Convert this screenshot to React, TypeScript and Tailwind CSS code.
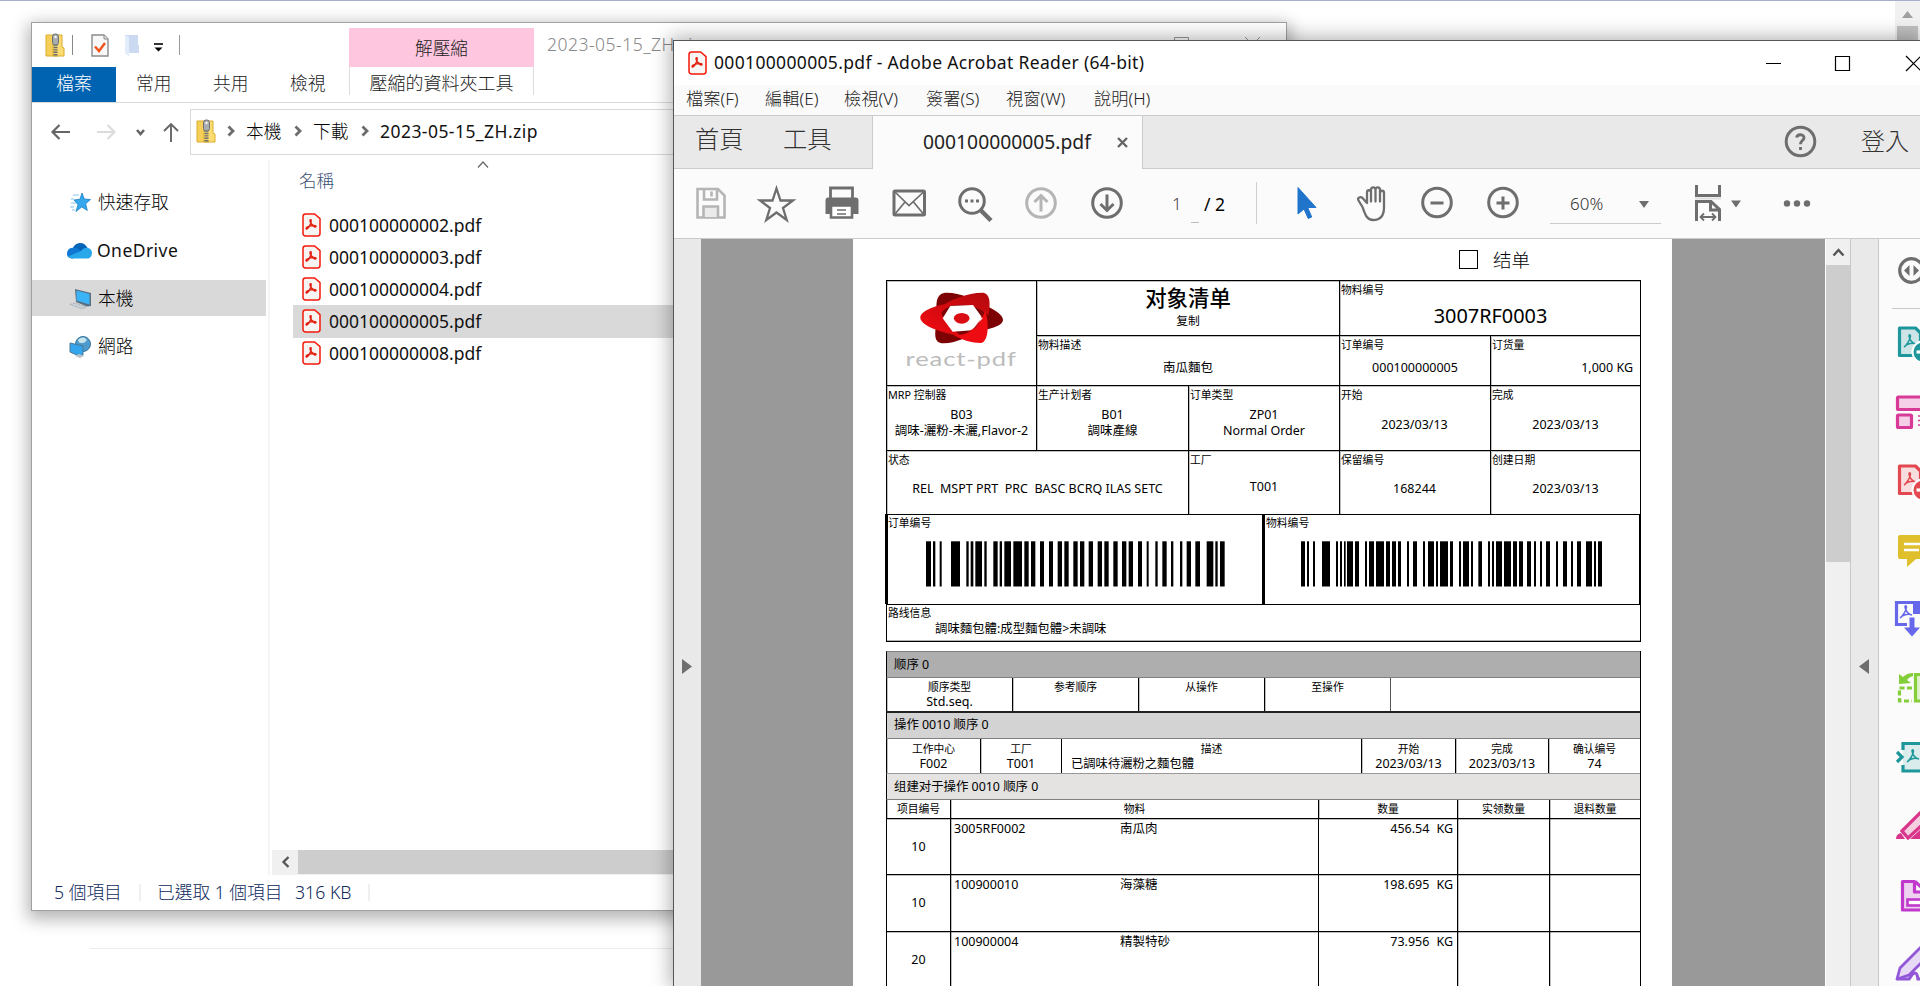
import type { ReactNode } from "react";

const ORDER_BARS = [
  [198, 213], [219, 226], [239, 245], [273, 300], [319, 326], [332, 340], [346, 366], [373, 380], [400, 413],
  [419, 426], [433, 453], [460, 486], [493, 506], [513, 526], [540, 552], [567, 579], [593, 606], [613, 626],
  [640, 653], [660, 673], [686, 699], [713, 726], [733, 746], [760, 773], [786, 799], [806, 819], [834, 846],
  [860, 866], [886, 893], [907, 920], [933, 940], [960, 967], [980, 993], [1006, 1020], [1040, 1060],
  [1066, 1073], [1080, 1094],
];

const MATERIAL_BARS = [
  [123, 135], [141, 147], [159, 165], [186, 210], [228, 234], [240, 246], [252, 257], [261, 279], [285, 297],
  [315, 321], [327, 342], [348, 372], [378, 390], [396, 408], [414, 423], [441, 447], [459, 471], [489, 495],
  [504, 522], [528, 534], [540, 564], [570, 579], [597, 603], [609, 627], [633, 639], [655, 666], [684, 690],
  [696, 702], [708, 726], [732, 753], [759, 771], [777, 789], [801, 813], [822, 828], [840, 846], [858, 870],
  [888, 894], [909, 921], [933, 939], [951, 963], [978, 996], [1002, 1008], [1014, 1026],
];

const FILES = ["000100000002.pdf", "000100000003.pdf", "000100000004.pdf", "000100000005.pdf", "000100000008.pdf"];

const ITEMS = [
  { no: "10", code: "3005RF0002", name: "南瓜肉", qty: "456.54", h: "h-[56px]" },
  { no: "10", code: "100900010", name: "海藻糖", qty: "198.695", h: "h-[57px]" },
  { no: "20", code: "100900004", name: "精製特砂", qty: "73.956", h: "h-[56px]" },
];

function PdfIcon() {
  return (
    <svg width="19" height="24" viewBox="0 0 19 24" className="shrink-0">
      <path d="M3.500 1h9.200L18 5.600V20.500a2.400 2.400 0 0 1-2.400 2.400H3.500A2.500 2.500 0 0 1 1 20.400V3.400A2.500 2.500 0 0 1 3.500 1z" fill="#f7f4f4" stroke="#f5190a" strokeWidth="1.500" />
      <path d="M4.200 15.800c-.5-.9.800-2 3.200-2.700 1.200-2 2-4.300 1.800-5.700-.1-.9-1.200-.8-1.200.1 0 2 2.300 5.200 4.500 6.200 1.500.6 2-.7.800-1-1.500-.4-3.900-.1-5.900.4-1.200 2.200-2.600 3.400-3.200 2.700z" fill="none" stroke="#e3200f" strokeWidth="1.500" />
    </svg>
  );
}

function ZipIcon() {
  return (
    <svg width="20" height="24" viewBox="0 0 20 24" className="shrink-0">
      <path d="M1 2h12v21H1z" fill="#f5cf57" stroke="#dcae2c" strokeWidth="1" />
      <path d="M13 2h4v12l2 1v8H8V2z" fill="#fbdc72" stroke="#dcae2c" strokeWidth="1" />
      <path d="M10.500 9v14" stroke="#6b6b6b" strokeWidth="4" strokeDasharray="1.400 1" />
      <rect x="7.500" y="1" width="6" height="11" rx="2.500" fill="#a9adb0" stroke="#6d7275" />
      <circle cx="10.500" cy="4" r="1.200" fill="#f3f3f3" />
    </svg>
  );
}

function Chevron() {
  return (
    <svg width="9" height="12" viewBox="0 0 9 12" className="shrink-0">
      <path d="M1.500 1.500 6 6l-4.500 4.500" fill="none" stroke="#6c6c6c" strokeWidth="2.800" />
    </svg>
  );
}

function Barcode({ bars, offset, width }: { bars: number[][]; offset: number; width: number }) {
  return (
    <svg width={width} height="46" viewBox={`0 0 ${width} 46`}>
      {bars.map(([a, b]) => (
        <rect key={a} x={(a - offset) / 3} y="0.300" width={(b - a) / 3} height="45.200" fill="#000" />
      ))}
    </svg>
  );
}

function Logo() {
  return (
    <svg width="90" height="57" viewBox="170 150 270 171">
      <defs>
        <linearGradient id="bright" x1="0" y1="1" x2="1" y2="0">
          <stop offset="0" stopColor="#f50c12" />
          <stop offset="1" stopColor="#c40a0f" />
        </linearGradient>
        <linearGradient id="top" x1="0" y1="1" x2="1" y2="0">
          <stop offset="0" stopColor="#e0090f" />
          <stop offset="1" stopColor="#b10a0e" />
        </linearGradient>
      </defs>
      <path d="M236 250C222 190 226 158 260 158c40 0 85 22 112 38 34 14 56 30 56 44 0 15-30 25-60 31-30 14-80 39-118 39-28 0-28-22-22-60z" fill="#7c0204" />
      <path d="M180 233c0-18 38-34 75-41-16 14-16 28-2 44 10 14 25 34 50 52-60-9-123-32-123-55z" fill="url(#bright)" />
      <path d="M234 206c30-27 90-48 131-48 24 0 27 30 19 68-22-20-46-31-84-31-28 0-48 6-64 34-4-8-6-16-2-23z" fill="url(#top)" />
      <path d="M374 212c13 32 12 97-14 97-24 0-55-9-80-24 40 0 72-10 94-73z" fill="#ee0b11" />
      <path d="M270 198l68-3 29 40-32 36-58 4-30-40z" fill="#fff" />
      <path d="M367 215c-4 30-22 52-56 66l24-9 30-40z" fill="#ee0b11" />
      <ellipse cx="304" cy="235" rx="23.500" ry="16" fill="#d90d12" />
    </svg>
  );
}

function Cell({ label, className = "", children }: { label?: string; className?: string; children?: ReactNode }) {
  return (
    <div className={`flex flex-col items-center border-l border-t border-black text-[12.500px] leading-4 shadow-[inset_1px_1px_0_rgba(0,0,0,0.250)] ${className}`}>
      {label && <div className="w-full pl-px pt-px text-left text-[10.800px] leading-4">{label}</div>}
      {children}
    </div>
  );
}

function HeadCell({ label, value, className }: { label: string; value?: string; className: string }) {
  return (
    <div className={`flex flex-col items-center border-l border-black text-[12.500px] leading-[14px] shadow-[inset_1px_0_0_rgba(0,0,0,0.250)] ${className}`}>
      <div className="text-[10.800px] leading-4">{label}</div>
      {value && <div className="whitespace-nowrap">{value}</div>}
    </div>
  );
}

function PdfPage() {
  return (
    <div className="h-full w-[819px] overflow-hidden bg-white pl-[33px] font-['Noto_Sans','Noto_Sans_CJK_SC',sans-serif] text-black">
      <div className="flex h-[41px] pl-[573px] pt-[11px]">
        <div className="h-[19px] w-[19px] border border-black" />
        <div className="ml-[15px] text-[18.500px] font-light leading-5">结单</div>
      </div>
      <div className="grid w-[755px] grid-cols-[150px_152px_151px_151px_151px] grid-rows-[55px_50px_65px_64px] border-r border-black">
        <Cell className="row-span-2 pt-[9px]">
          <Logo />
          <div className="mt-px scale-x-[1.350] font-['Lato',sans-serif] text-[19px] leading-[22px] tracking-[0.600px] text-[#bcbcbc]">react-pdf</div>
        </Cell>
        <Cell className="col-span-2">
          <div className="mt-[5px] text-[21.400px] font-medium leading-6">对象清单</div>
          <div className="mt-[2px] text-[11.800px]">复制</div>
        </Cell>
        <Cell label="物料编号" className="col-span-2">
          <div className="mt-[6px] text-[19.900px] leading-6">3007RF0003</div>
        </Cell>
        <Cell label="物料描述" className="col-span-2"><div className="mt-[7px]">南瓜麵包</div></Cell>
        <Cell label="订单编号"><div className="mt-[7px]">000100000005</div></Cell>
        <Cell label="订货量"><div className="mt-[7px] w-full pr-[8px] text-right">1,000 KG</div></Cell>
        <Cell label="MRP 控制器"><div className="mt-[4px]">B03</div><div className="whitespace-nowrap">調味-灑粉-未灑,Flavor-2</div></Cell>
        <Cell label="生产计划者"><div className="mt-[4px]">B01</div><div>調味產線</div></Cell>
        <Cell label="订单类型"><div className="mt-[4px]">ZP01</div><div>Normal Order</div></Cell>
        <Cell label="开始"><div className="mt-[14px] pr-px">2023/03/13</div></Cell>
        <Cell label="完成"><div className="mt-[14px] pr-px">2023/03/13</div></Cell>
        <Cell label="状态" className="col-span-2"><div className="mt-[13px] whitespace-pre text-[12.500px]">{"REL  MSPT PRT  PRC  BASC BCRQ ILAS SETC"}</div></Cell>
        <Cell label="工厂"><div className="mt-[11px]">T001</div></Cell>
        <Cell label="保留编号"><div className="mt-[13px] pr-px">168244</div></Cell>
        <Cell label="创建日期"><div className="mt-[13px] pr-px">2023/03/13</div></Cell>
      </div>
      <div className="-ml-px flex h-[90px] w-[756px] border-r-2 border-t border-black">
        <div className="w-[377px] border-l-[3px] border-black">
          <div className="text-[10.800px] leading-4">订单编号</div>
          <div className="pl-[38px] pt-[10px]"><Barcode bars={ORDER_BARS} offset={198} width={300} /></div>
        </div>
        <div className="flex-1 border-l-[3px] border-black">
          <div className="pl-px text-[10.800px] leading-4">物料编号</div>
          <div className="pl-[36px] pt-[10px]"><Barcode bars={MATERIAL_BARS} offset={123} width={302} /></div>
        </div>
      </div>
      <div className="h-[38px] w-[755px] border border-black shadow-[inset_0_-1px_0_rgba(0,0,0,0.300)]">
        <div className="pl-px text-[10.800px] leading-4">路线信息</div>
        <div className="pl-[48px] text-[12.400px] leading-4">調味麵包體:成型麵包體&gt;未調味</div>
      </div>
      <div className="mt-[9px] w-[755px] border-r border-black">
        <div className="flex h-[27px] items-center border-y border-l border-[#808080] border-l-black bg-[#aeaeae] pl-[7px] pt-px text-[12.400px]">顺序 0</div>
        <div className="flex h-[33px]">
          <HeadCell className="w-[126px] pt-px" label="顺序类型" value="Std.seq." />
          <HeadCell className="w-[126px] pt-px" label="参考顺序" />
          <HeadCell className="w-[126px] pt-px" label="从操作" />
          <HeadCell className="w-[126px] pt-px" label="至操作" />
          <div className="w-[250px] border-l border-[#555]" />
        </div>
        <div className="flex h-[28px] items-center border-b border-l border-t-2 border-b-[#808080] border-l-black border-t-[#222] bg-[#d3d3d3] pl-[7px] text-[12.400px]">操作 0010 顺序 0</div>
        <div className="flex h-[34px]">
          <HeadCell className="w-[94px] pt-[2px]" label="工作中心" value="F002" />
          <HeadCell className="w-[81px] pt-[2px]" label="工厂" value="T001" />
          <div className="w-[300px] border-l border-black pt-[2px] text-[12.300px] leading-[14px]">
            <div className="text-center text-[10.800px] leading-4">描述</div>
            <div className="pl-[9px]">已調味待灑粉之麵包體</div>
          </div>
          <HeadCell className="w-[94px] pt-[2px]" label="开始" value="2023/03/13" />
          <HeadCell className="w-[93px] pt-[2px]" label="完成" value="2023/03/13" />
          <HeadCell className="w-[92px] pt-[2px]" label="确认编号" value="74" />
        </div>
        <div className="flex h-[27px] items-center border-y border-l border-[#999] border-b-[#808080] border-l-black bg-[#e4e3e1] pl-[7px] pt-px text-[12.400px]">组建对于操作 0010 顺序 0</div>
        <div className="flex h-[18px]">
          <HeadCell className="w-[64px] pt-px" label="项目编号" />
          <HeadCell className="w-[368px] pt-px" label="物料" />
          <HeadCell className="w-[139px] pt-px" label="数量" />
          <HeadCell className="w-[92px] pt-px" label="实领数量" />
          <HeadCell className="w-[91px] pt-px" label="退料数量" />
        </div>
        {ITEMS.map((it) => (
          <div key={it.code} className={`flex border-t border-black text-[12.500px] leading-4 shadow-[inset_0_1px_0_rgba(0,0,0,0.250)] ${it.h}`}>
            <div className="flex w-[64px] items-center justify-center border-l border-black">{it.no}</div>
            <div className="flex w-[368px] border-l border-black pl-[3px] pt-[2px] shadow-[inset_1px_0_0_rgba(0,0,0,0.250)]">
              <div className="w-[166px]">{it.code}</div>
              <div>{it.name}</div>
            </div>
            <div className="flex w-[139px] justify-end border-l border-black pr-[4px] pt-[2px]">
              <div>{it.qty}</div>
              <div className="ml-[7px]">KG</div>
            </div>
            <div className="w-[92px] border-l border-black shadow-[inset_1px_0_0_rgba(0,0,0,0.250)]" />
            <div className="w-[91px] border-l border-black shadow-[inset_1px_0_0_rgba(0,0,0,0.250)]" />
          </div>
        ))}
      </div>
    </div>
  );
}

function Explorer() {
  return (
    <div className="absolute left-[31px] top-[22px] flex h-[889px] w-[1256px] flex-col border border-[#a0a0a0] bg-white font-['Noto_Sans','Noto_Sans_CJK_TC',sans-serif] text-[17.700px] font-light text-black shadow-[0_5px_16px_3px_rgba(0,0,0,0.300)]">
      <div className="flex h-[80px] border-b border-[#dadbdc]">
        <div className="flex w-[317px] flex-col">
          <div className="flex h-[44px] items-center pl-[13px]">
            <ZipIcon />
            <div className="ml-[7px] h-5 w-px bg-[#888]" />
            <svg className="ml-[18px]" width="18" height="23" viewBox="0 0 18 23">
              <path d="M1 1h12l4 4v17H1z" fill="#f8f8f8" stroke="#8b8b8b" strokeWidth="1.400" />
              <path d="M13 1v4h4" fill="#ddd" stroke="#8b8b8b" />
              <path d="M4 12.500 8 17l6-8" fill="none" stroke="#f0541a" strokeWidth="2.400" />
            </svg>
            <svg className="ml-[15px]" width="17" height="22" viewBox="0 0 17 22">
              <path d="M1 1h13v10h1v8H5v3l-4-3z" fill="#cbdaf0" />
              <path d="M1 1l4 2v19l-4-3z" fill="#e2ecfa" />
            </svg>
            <svg className="ml-[12px] mt-1" width="11" height="9" viewBox="0 0 11 9">
              <path d="M1 1h9" stroke="#000" strokeWidth="1.600" />
              <path d="M1.500 4.500h8l-4 4z" />
            </svg>
            <div className="ml-[15px] h-5 w-px bg-[#999]" />
          </div>
          <div className="flex h-[35px] text-[17.700px] text-[#222]">
            <div className="flex w-[84px] items-center justify-center bg-[#0063b1] pb-[2px] text-white">檔案</div>
            <div className="ml-[20px] w-[77px] leading-[33px]">常用</div>
            <div className="w-[77px] leading-[33px]">共用</div>
            <div className="leading-[33px]">檢視</div>
          </div>
        </div>
        <div className="flex w-[185px] flex-col pt-[5px] text-[17.700px] text-[#222]">
          <div className="flex h-[39px] items-center justify-center bg-[#fec6df] pt-px">解壓縮</div>
          <div className="flex h-[28px] items-end justify-center border-x border-[#ddd]"><span className="whitespace-nowrap text-[18px] leading-[24px]">壓縮的資料夾工具</span></div>
        </div>
        <div className="flex-1 pl-[13px] pt-[4px] text-[17.500px] leading-[34px] tracking-[0.500px] text-[#888]">2023-05-15_ZH.zip</div>
        <svg className="mr-[-4px] mt-[14px]" width="130" height="16" viewBox="0 0 130 16">
          <path d="M14.500.500h14v14h-14zM85 0l15 15M100 0 85 15" fill="none" stroke="#999" />
        </svg>
      </div>
      <div className="flex h-[57px] items-center">
        <svg className="ml-[18px] shrink-0" width="132" height="26" viewBox="0 0 132 26">
          <g fill="none" stroke="#666" strokeWidth="2.200">
            <path d="M20 13H3M9.500 6 2.500 13l7 7" />
            <path d="M47 13h17M57.500 6l7 7-7 7" stroke="#dcdcdc" />
            <path d="M87 11l3.500 4 3.500-4" strokeWidth="2.600" />
            <path d="M121 23V5M114 12l7-7 7 7" strokeWidth="1.900" />
          </g>
        </svg>
        <div className="ml-[8px] flex h-[46px] flex-1 items-center border border-r-0 border-[#d9d9d9] pl-[5px] pb-px">
          <ZipIcon />
          <div className="ml-[11px] w-[19px]"><Chevron /></div>
          <div className="w-[48px]">本機</div>
          <div className="w-[19px]"><Chevron /></div>
          <div className="w-[48px]">下載</div>
          <div className="w-[19px]"><Chevron /></div>
          <div className="text-[17.500px] font-normal tracking-[0.450px] text-[#111]">2023-05-15_ZH.zip</div>
        </div>
      </div>
      <div className="flex min-h-0 flex-1">
        <div className="flex w-[238px] flex-col border-r-2 border-[#f4f4f4] pt-[24px]">
          <div className="flex h-[36px] items-center pl-[38px]">
            <svg className="mr-[7px]" width="21" height="21" viewBox="0 0 21 21">
              <path d="M12 1l2.300 6 6.200.5-4.800 4.200 1.600 6.800-5.500-3.600L6 19.500l2-6.800L4 8l6-.8z" fill="#35a7ec" stroke="#1b7fc4" strokeWidth=".8" />
              <path d="M3 3h6M1 7h3M1 11h5M0 15h4M2 18h3" stroke="#7fc6f2" strokeWidth="1.200" />
            </svg>
            <span>快速存取</span>
          </div>
          <div className="mt-[12px] flex h-[36px] items-center pl-[35px]">
            <svg className="mr-[5px]" width="25" height="17" viewBox="0 0 25 17">
              <path d="M5 13C4 6 8 1 13 1c4 0 6 2 7.500 5L14 13z" fill="#0364b8" />
              <path d="M4 6c4-1 7 0 10 3l-8 7.500C1 16.500 0 14 0 11.500S1.500 6.500 4 6z" fill="#0f78d4" />
              <path d="M14 9c2-3 5-3.500 7-3 3 .7 4 3 4 5s-1 5-4 5.500H6c-2 0-4-.8-5-2z" fill="#28a8ea" />
            </svg>
            <span className="text-[17.500px] font-normal tracking-[0.450px] text-[#111]">OneDrive</span>
          </div>
          <div className="mt-[12px] flex h-[36px] w-[234px] items-center bg-[#d9d9d9] pl-[37px]">
            <svg className="mr-[6px]" width="23" height="21" viewBox="0 0 23 21">
              <path d="M6 1l16 4v13l-4 .5L7 14z" fill="#5b6f80" />
              <path d="M7.500 2.500 20.500 6v10.500L7.500 12.500z" fill="#3bb4f7" />
              <path d="M1 16.500l5-1.500 11 4-4 2z" fill="#c9d0d5" stroke="#9aa3ab" strokeWidth=".7" strokeDasharray="2 1" />
            </svg>
            <span>本機</span>
          </div>
          <div className="mt-[12px] flex h-[36px] items-center pl-[37px]">
            <svg className="mr-[6px]" width="23" height="23" viewBox="0 0 23 23">
              <circle cx="14" cy="9" r="7.500" fill="#4d9ccb" stroke="#35759e" />
              <path d="M9 5c3-3 6-3 8-1s-2 4-4 4-3 0-4-3z" fill="#c7e3ea" />
              <path d="M1 8l13 3v9l-4 1-9-4z" fill="#34a6ee" stroke="#4b7795" />
              <path d="M6 21l4-2 5 2-4 2z" fill="#bac2c8" />
            </svg>
            <span>網路</span>
          </div>
        </div>
        <div className="flex min-w-0 flex-1 flex-col">
          <div className="flex h-[39px] items-center pl-[29px] pt-[2px] text-[17.500px] text-[#3b5176]">
            名稱
            <svg className="mb-[31px] ml-[143px]" width="12" height="8" viewBox="0 0 12 8"><path d="M1 6.500 6 1l5 5.500" fill="none" stroke="#666" strokeWidth="1.200" /></svg>
          </div>
          <div className="flex flex-col pl-[23px] pt-[10px]">
            {FILES.map((f) => (
              <div key={f} className={f === "000100000005.pdf" ? "-mb-px flex h-[33px] items-center bg-[#d9d9d9] pb-px pl-[9px] font-normal" : "flex h-[32px] items-center pl-[9px] font-normal"}>
                <PdfIcon />
                <span className="ml-[8px] text-[17.500px] leading-6 text-[#111]">{f}</span>
              </div>
            ))}
          </div>
          <div className="ml-[2px] mt-auto flex h-[25px] bg-[#f0f0f0] pb-px">
            <div className="flex w-[26px] items-center justify-center">
              <svg width="9" height="12" viewBox="0 0 9 12"><path d="M7.500 1 2.500 6l5 5" fill="none" stroke="#555" strokeWidth="2.300" /></svg>
            </div>
            <div className="flex-1 bg-[#cdcdcd]" />
          </div>
        </div>
      </div>
      <div className="flex h-[35px] items-center pb-px pl-[22px] text-[#0f2a5c]">
        <div className="w-[85px] whitespace-nowrap">5 個項目</div>
        <div className="h-[17px] w-[2px] bg-[#f0f0f0]" />
        <div className="ml-[16px] w-[138px] whitespace-nowrap">已選取 1 個項目</div>
        <div className="w-[73px]">316 KB</div>
        <div className="h-[17px] w-[2px] bg-[#f0f0f0]" />
      </div>
    </div>
  );
}

const MENU = [
  ["檔案(F)", "w-[79px]"], ["編輯(E)", "w-[79px]"], ["檢視(V)", "w-[82px]"],
  ["簽署(S)", "w-[80px]"], ["視窗(W)", "w-[88px]"], ["說明(H)", "w-[80px]"],
];

function Toolbar() {
  return (
    <div className="flex h-[70px] shrink-0 items-center border-b border-[#cbcbcb] bg-[#fbfbfb] pb-px text-[17px] font-light text-[#222]">
      <svg className="ml-[20px] shrink-0" width="436" height="40" viewBox="0 0 436 40" fill="none" stroke="#6e6e6e" strokeWidth="3">
        <g stroke="#b5b5b5" strokeWidth="2.600">
          <path d="M3.500 6h20.500l6.500 6.500V34.500H3.500z" />
          <path d="M10 6.500v10h13v-10M17.500 8.500v5" />
          <path d="M9.500 34V23.500h14.500V34" fill="#ebebeb" />
        </g>
        <path d="M82.500 5.500l4 12H99l-10 7.500 3.700 12-10.200-7.500-10.200 7.500 3.700-12-10-7.500h12.500z" strokeWidth="2.300" />
        <path d="M136.500 15V5h22v10" strokeWidth="2.800" />
        <path d="M133.500 14.500h28a3 3 0 0 1 3 3V31h-33V17.500a3 3 0 0 1 2-3z" fill="#6e6e6e" stroke="none" />
        <path d="M137 22.500h21v12h-21z" fill="#fff" strokeWidth="2.600" />
        <path d="M143 27h9M143 31h9" strokeWidth="1.500" />
        <rect x="200" y="8" width="30.500" height="24" rx="1" strokeWidth="3" />
        <path d="M201 9l14 13.500L229.500 9M201 31l10-12M229.500 31l-10-12" strokeWidth="1.700" />
        <circle cx="278" cy="18" r="12.300" />
        <path d="M286.500 27l10.500 10.500" strokeWidth="4.500" />
        <path d="M271 18h3M276.500 18h3M282 18h3" strokeWidth="3" />
        <g stroke="#b5b5b5"><circle cx="347" cy="20" r="14.300" /><path d="M347 28.500V13M340.500 19l6.500-6.500 6.500 6.500" /></g>
        <circle cx="413" cy="20" r="14.300" />
        <path d="M413 11.500V27M406.500 21l6.500 6.500 6.500-6.500" />
      </svg>
      <div className="ml-[42px] w-[19px] pt-[2px] text-[#444]">1</div>
      <div className="mt-[39px] h-px w-[8px] bg-[#bbb]" />
      <div className="ml-[5px] w-[52px] pt-[2px] text-[17.500px] font-normal text-black">/ 2</div>
      <div className="h-[42px] w-px bg-[#cfcfcf]" />
      <svg className="ml-[38px] shrink-0" width="230" height="40" viewBox="0 0 230 40" fill="none" stroke="#6e6e6e" strokeWidth="2.600">
        <path d="M3 4.500v26.500l6-5 4.200 9.500 3.500-1.500-4-9.500h8.300z" fill="#2174cb" stroke="#2174cb" strokeWidth="1" />
        <path transform="translate(1 0.500)" d="M66.500 23.500l-4-6.500c-1.500-2.500 2-4.500 4-2.500l4.500 5V9c0-3 4-3 4 0v9V6.500c0-3.500 4.500-3.500 4.500 0V18 6.500c0-3.500 4.500-3.500 4.500 0V18 9.500c0-3 4-3 4 0V24c0 8-4 12.500-11 12.500-6 0-7.500-4.500-10.500-13z" strokeWidth="2.300" strokeLinejoin="round" />
        <circle cx="142" cy="19.500" r="14.300" strokeWidth="3" />
        <path d="M135.500 20h13" strokeWidth="3" />
        <circle cx="208" cy="19.500" r="14.300" strokeWidth="3" />
        <path d="M201.500 20h13M208 13.500v13" strokeWidth="3" />
      </svg>
      <div className="ml-[25px] flex h-[42px] w-[111px] items-center border-b border-[#cbcbcb] pl-[20px] pt-[3px] text-[#333]">
        <span className="w-[69px]">60%</span>
        <svg width="10" height="7" viewBox="0 0 10 7"><path d="M0 0h10L5 7z" fill="#6e6e6e" /></svg>
      </div>
      <svg className="ml-[32px] shrink-0" width="122" height="40" viewBox="0 0 122 40" fill="none" stroke="#6e6e6e" strokeWidth="3">
        <path d="M3.500 2v10.500H26.500V2" />
        <path d="M2 15.500h26" stroke="#ddd" strokeWidth="2" />
        <path d="M3.500 38V18.500h14.500l8.500 8V38M17.500 18.500v8.500h8" />
        <path d="M7.500 34h15M11 30.500 7.500 34l3.500 3.500M19 30.500l3.500 3.500-3.500 3.500" strokeWidth="1.800" />
        <path d="M38 17.500h10l-5 7z" fill="#6e6e6e" stroke="none" />
        <g fill="#6e6e6e" stroke="none"><circle cx="94" cy="20.500" r="3.200" /><circle cx="104" cy="20.500" r="3.200" /><circle cx="114" cy="20.500" r="3.200" /></g>
      </svg>
    </div>
  );
}

function Acro({ x, y, color }: { x: number; y: number; color: string }) {
  return <path transform={`translate(${x} ${y})`} d="M0 12c2.500-1.500 6-7 6.500-10.500C6.700-.8 4.800-.8 5 1.200 5.300 4.200 8.500 8.800 12 9M2 10.200c3-1.800 7-2.400 10-1.200" fill="none" stroke={color} strokeWidth="1.500" />;
}

function ToolPane() {
  return (
    <div className="flex flex-1 flex-col items-start overflow-hidden border-l border-[#c8c8c8] bg-[#fbfbfb]">
      <svg className="shrink-0" width="60" height="747" viewBox="1879 239 60 747" fill="none" strokeWidth="3.200">
        <circle cx="1911.500" cy="270.500" r="11.800" stroke="#6e6e6e" />
        <path d="M1909.500 265v11l-5.500-5.500zM1913.500 265v11l5.500-5.500z" fill="#6e6e6e" />
        <path d="M1892 308.500h40" stroke="#c8c8c8" strokeWidth="1" />
        <g>
          <path d="M1899.500 328h16l5 5v22.500h-21z" fill="#cde5e7" stroke="#1d979b" strokeLinejoin="round" />
          <Acro x={1904} y={335} color="#1d979b" />
          <circle cx="1923" cy="352" r="10.500" fill="#1d979b" stroke="#fff" strokeWidth="2" />
          <path d="M1916.500 352h8" stroke="#fff" />
        </g>
        <rect x="1897.500" y="397" width="35" height="12.500" rx="1" fill="#f4cfe7" stroke="#d93a97" />
        <rect x="1897.500" y="415" width="14" height="12.500" rx="1" fill="#f4cfe7" stroke="#d93a97" />
        <path d="M1918 416h10M1918 420.500h10M1918 425h10" stroke="#d93a97" strokeWidth="1.500" />
        <g>
          <path d="M1899.500 466h16l5 5v22.500h-21z" fill="#f8dddf" stroke="#e34850" strokeLinejoin="round" />
          <Acro x={1904} y={473} color="#e34850" />
          <circle cx="1923" cy="490" r="10.500" fill="#e34850" stroke="#fff" strokeWidth="2" />
          <path d="M1916.500 490h8" stroke="#fff" />
        </g>
        <path d="M1900 535h32v24h-16l-9 8v-8h-7q-2 0-2-2v-20q0-2 2-2z" fill="#dfbf2c" />
        <path d="M1904 544h24M1904 550h15" stroke="#fff" strokeWidth="2.400" />
        <path d="M1907 624.500h-10.500v-22h22" stroke="#6767ec" />
        <Acro x={1900} y={606} color="#6767ec" />
        <path d="M1913 601h14v13h-14z" fill="#6767ec" />
        <path d="M1909.500 617.500h5v10h5.500l-8 9-8-9h5.500z" fill="#6767ec" />
        <path d="M1915.500 674.500v26.500h20v-26.500z" fill="#dff2cb" stroke="#84ce3a" />
        <path d="M1912 688h-12.500v13h12.500" stroke="#84ce3a" strokeDasharray="5 2.500" />
        <path d="M1899 674l4 3q4-4 10-4v3q-4 1-6 4l4 3-12 1z" fill="#84ce3a" />
        <path d="M1903 750v-6.500h26V771h-26v-6" fill="#dbeced" stroke="#1d979b" />
        <path d="M1897 752l5 5-5 5" stroke="#1d979b" />
        <Acro x={1907} y={750} color="#1d979b" />
        <path d="M1902 831l22-22 8 7-24 22z" fill="#f3cfe0" stroke="#d9358b" />
        <path d="M1896 839q0-5 5-6l4 6zM1910 839l10-9h8v9z" fill="#d9358b" />
        <path d="M1914.500 881.500h-12v28.500h24v-18h-12z" fill="#edd3f0" stroke="#c038cc" strokeLinejoin="round" />
        <path d="M1915 881.500l10 9" stroke="#c038cc" />
        <rect x="1907.500" y="899.500" width="24" height="6" fill="#fff" stroke="#c038cc" strokeWidth="2.600" />
        <path d="M1897 979l3-11 21-21 8 8-20 20z" fill="#e8daf5" stroke="#9256d9" strokeWidth="2.800" strokeLinejoin="round" />
        <path d="M1897 979h12q4-6 6-6t3 6h10" stroke="#9256d9" />
      </svg>
    </div>
  );
}

function Acrobat() {
  return (
    <div className="absolute left-[673px] top-[40px] flex h-[946px] w-[1247px] flex-col overflow-hidden border-l border-t border-[#555] bg-white font-['Noto_Sans','Noto_Sans_CJK_TC',sans-serif] shadow-[0_0_18px_3px_rgba(0,0,0,0.300)]">
      <div className="flex h-[44px] shrink-0 items-center bg-white pb-px pl-[14px]">
        <PdfIcon />
        <span className="ml-[7px] flex-1 whitespace-nowrap pb-px text-[17.500px] tracking-[0.340px] text-[#111]">000100000005.pdf - Adobe Acrobat Reader (64-bit)</span>
        <svg className="shrink-0" width="155" height="20" viewBox="0 0 155 20" fill="none" stroke="#000" strokeWidth="1.200">
          <path d="M1 10.500h15M70.500 3.500h14v14h-14zM141 3l15 15M156 3l-15 15" />
        </svg>
      </div>
      <div className="flex h-[31px] shrink-0 items-center border-b border-[#cbcbcb] bg-[#fafafa] pb-[3px] pl-[12px] text-[17.200px] font-light text-[#222]">
        {MENU.map(([label, w]) => <div key={label} className={`whitespace-nowrap ${w}`}>{label}</div>)}
      </div>
      <div className="flex h-[53px] shrink-0 bg-[#e9e9e9] text-[#333]">
        <div className="flex w-[199px] border-b border-r border-[#cbcbcb] pl-[21px] text-[24.300px] font-light leading-[45px]">
          <div className="w-[88px]">首頁</div>
          <div>工具</div>
        </div>
        <div className="flex w-[269px] items-center bg-[#fbfbfb] pl-[50px] text-[19.300px] text-[#222]">
          <span className="w-[194px]">000100000005.pdf</span>
          <svg width="11" height="11" viewBox="0 0 11 11"><path d="M1 1l9 9M10 1l-9 9" stroke="#666" strokeWidth="2.400" /></svg>
        </div>
        <div className="flex flex-1 items-center border-b border-l border-[#cbcbcb] pb-px pl-[641px]">
          <svg className="shrink-0" width="33" height="33" viewBox="0 0 33 33" fill="none" stroke="#6e6e6e" strokeWidth="3">
            <circle cx="16.500" cy="16.500" r="14.300" />
            <path d="M12.500 12.500c1-4 8-3.500 7.500.5-.3 2.500-3.500 3-3.500 6.200M16.500 22v3" strokeWidth="2.800" />
          </svg>
          <span className="ml-[44px] whitespace-nowrap pb-px text-[24px] font-light leading-[48px]">登入</span>
        </div>
      </div>
      <Toolbar />
      <div className="flex min-h-0 flex-1 bg-[#999]">
        <div className="flex w-[27px] items-center justify-center bg-[#e9e9e9] pt-[108px]">
          <svg className="-ml-px" width="10" height="15" viewBox="0 0 10 15"><path d="M0 0v15l10-7.500z" fill="#6e6e6e" /></svg>
        </div>
        <div className="flex w-[1124px] justify-start pl-[152px]"><PdfPage /></div>
        <div className="w-[26px] border-l border-r border-l-white border-r-[#c8c8c8] bg-[#f0f0f0]">
          <div className="flex h-[26px] items-center justify-center">
            <svg width="13" height="11" viewBox="0 0 13 11"><path d="M1.500 8.500l5-5.500 5 5.500" fill="none" stroke="#555" strokeWidth="2.400" /></svg>
          </div>
          <div className="h-[297px] bg-[#cdcdcd]" />
        </div>
        <div className="flex w-[27px] items-center justify-center bg-[#e9e9e9] pt-[108px]">
          <svg className="-ml-px" width="10" height="15" viewBox="0 0 10 15"><path d="M10 0v15L0 7.500z" fill="#6e6e6e" /></svg>
        </div>
        <ToolPane />
      </div>
    </div>
  );
}

export default function App() {
  return (
    <div className="relative flex h-[986px] w-[1920px] flex-col overflow-hidden border-t border-[#a5b0cd] bg-white">
      <div className="flex h-[947px] justify-end">
        <div className="flex w-[25px] flex-col items-center bg-[#f1f1f1] pt-[10px]">
          <svg width="11" height="7" viewBox="0 0 11 7"><path d="M0 7h11L5.500 0z" fill="#a0a0a0" /></svg>
          <div className="mt-[8px] h-40 w-[21px] bg-[#c1c1c1]" />
        </div>
      </div>
      <div className="ml-[90px] h-px w-[700px] bg-[#ececec]" />
      <div className="absolute -top-px left-0 h-[986px] w-[1920px]">
        <Explorer />
        <Acrobat />
      </div>
    </div>
  );
}
